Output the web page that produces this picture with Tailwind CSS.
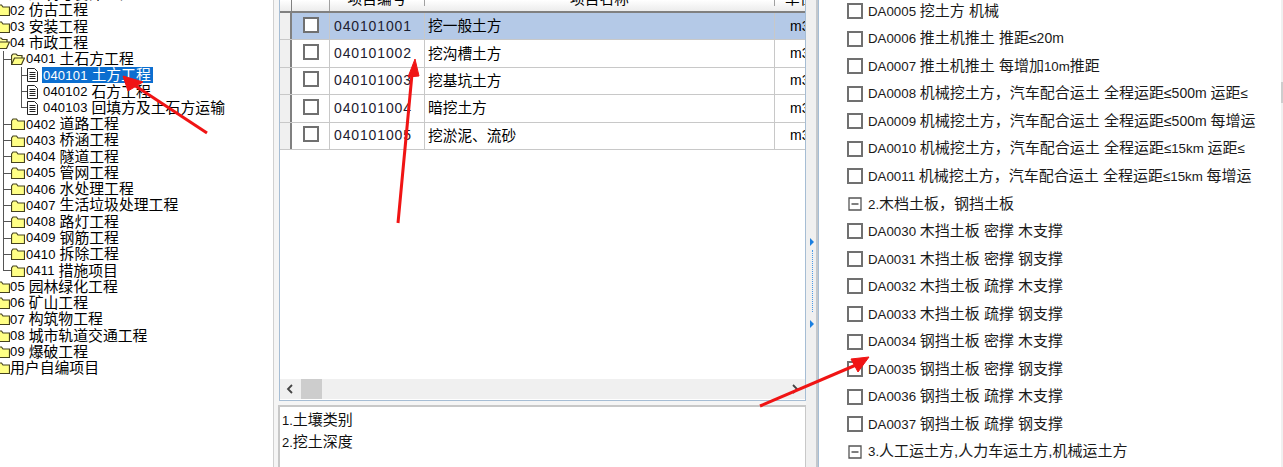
<!DOCTYPE html>
<html lang="zh-CN">
<head>
  <meta charset="UTF-8" />
  <title>工程量清单</title>
  <script src="https://cdn.jsdelivr.net/npm/@tailwindcss/browser@4"></script>
</head>
<body class="bg-white">
<svg class="hidden">
  <symbol id="folder" viewBox="0 0 14 12"><path d="M.5 3V11.5H13.5V3H7L5.5 1H2L.5 3Z" fill="#ffff85" stroke="#45421f" stroke-width="1.2"/></symbol>
  <symbol id="folder-open" viewBox="0 0 14 12"><path d="M.5 11.5V2.5L2 1H5L6.5 2.5H11V5" fill="#ffffa0" stroke="#45421f" stroke-width="1.2"/><path d="M.5 11.5L3.5 5H13.5L10.5 11.5Z" fill="#ffff85" stroke="#45421f" stroke-width="1.2"/></symbol>
  <symbol id="doc" viewBox="0 0 11 14"><path d="M.5.5H7.5L10.5 3.5V13.5H.5Z" fill="#fff" stroke="#222"/><path d="M2.5 4.5H8.5M2.5 6.5H8.5M2.5 8.5H8.5M2.5 10.5H8.5" stroke="#222"/></symbol>
</svg>

<div class="relative flex w-[1283px] h-[467px] overflow-hidden bg-white text-black text-[14.7px] font-['Liberation_Sans','Noto_Sans_CJK_SC',sans-serif]">

  <!-- tree -->
  <div class="w-[274px] shrink-0 overflow-hidden border-r border-[#d0d0d0] text-[14.85px] whitespace-nowrap">
    <div class="mt-[-14px]">
      <div class="flex items-center h-[16.27px] ml-[-4px]"><svg class="w-[14px] h-[12px]"><use href="#folder"/></svg><span class="text-[13px] tracking-[.2px]">01&nbsp;</span>建筑与装饰工程</div>
      <div class="flex items-center h-[16.27px] ml-[-4px]"><svg class="w-[14px] h-[12px]"><use href="#folder"/></svg><span class="text-[13px] tracking-[.2px]">02&nbsp;</span>仿古工程</div>
      <div class="flex items-center h-[16.27px] ml-[-4px]"><svg class="w-[14px] h-[12px]"><use href="#folder"/></svg><span class="text-[13px] tracking-[.2px]">03&nbsp;</span>安装工程</div>
      <div class="flex items-center h-[16.27px] ml-[-4px]"><svg class="w-[14px] h-[12px]"><use href="#folder-open"/></svg><span class="text-[13px] tracking-[.2px]">04&nbsp;</span>市政工程</div>

      <div class="relative">
        <span class="absolute left-[3px] top-0 bottom-[8px] w-px bg-[#555]"></span>
        <div class="flex items-center h-[16.27px] ml-[3px]"><span class="w-[8px] h-px bg-[#555]"></span><svg class="w-[14px] h-[12px]"><use href="#folder-open"/></svg><span class="text-[13px] tracking-[.2px] ml-[1px]">0401&nbsp;</span>土石方工程</div>
        <div class="relative">
          <span class="absolute left-[21px] top-0 bottom-[8px] w-px bg-[#555]"></span>
          <div class="flex items-center h-[16.27px] ml-[21px]"><span class="w-[6px] h-px bg-[#555]"></span><svg class="w-[11px] h-[14px]"><use href="#doc"/></svg><span class="flex items-center h-[16px] ml-[4px] pl-px pr-[2px] bg-[#0c6fd0] text-white"><span class="text-[13px] tracking-[.2px]">040101&nbsp;</span>土方工程</span></div>
          <div class="flex items-center h-[16.27px] ml-[21px]"><span class="w-[6px] h-px bg-[#555]"></span><svg class="w-[11px] h-[14px]"><use href="#doc"/></svg><span class="text-[13px] tracking-[.2px] ml-[5px]">040102&nbsp;</span>石方工程</div>
          <div class="flex items-center h-[16.27px] ml-[21px]"><span class="w-[6px] h-px bg-[#555]"></span><svg class="w-[11px] h-[14px]"><use href="#doc"/></svg><span class="text-[13px] tracking-[.2px] ml-[5px]">040103&nbsp;</span>回填方及土石方运输</div>
        </div>
        <div class="flex items-center h-[16.27px] ml-[3px]"><span class="w-[8px] h-px bg-[#555]"></span><svg class="w-[14px] h-[12px]"><use href="#folder"/></svg><span class="text-[13px] tracking-[.2px] ml-[1px]">0402&nbsp;</span>道路工程</div>
        <div class="flex items-center h-[16.27px] ml-[3px]"><span class="w-[8px] h-px bg-[#555]"></span><svg class="w-[14px] h-[12px]"><use href="#folder"/></svg><span class="text-[13px] tracking-[.2px] ml-[1px]">0403&nbsp;</span>桥涵工程</div>
        <div class="flex items-center h-[16.27px] ml-[3px]"><span class="w-[8px] h-px bg-[#555]"></span><svg class="w-[14px] h-[12px]"><use href="#folder"/></svg><span class="text-[13px] tracking-[.2px] ml-[1px]">0404&nbsp;</span>隧道工程</div>
        <div class="flex items-center h-[16.27px] ml-[3px]"><span class="w-[8px] h-px bg-[#555]"></span><svg class="w-[14px] h-[12px]"><use href="#folder"/></svg><span class="text-[13px] tracking-[.2px] ml-[1px]">0405&nbsp;</span>管网工程</div>
        <div class="flex items-center h-[16.27px] ml-[3px]"><span class="w-[8px] h-px bg-[#555]"></span><svg class="w-[14px] h-[12px]"><use href="#folder"/></svg><span class="text-[13px] tracking-[.2px] ml-[1px]">0406&nbsp;</span>水处理工程</div>
        <div class="flex items-center h-[16.27px] ml-[3px]"><span class="w-[8px] h-px bg-[#555]"></span><svg class="w-[14px] h-[12px]"><use href="#folder"/></svg><span class="text-[13px] tracking-[.2px] ml-[1px]">0407&nbsp;</span>生活垃圾处理工程</div>
        <div class="flex items-center h-[16.27px] ml-[3px]"><span class="w-[8px] h-px bg-[#555]"></span><svg class="w-[14px] h-[12px]"><use href="#folder"/></svg><span class="text-[13px] tracking-[.2px] ml-[1px]">0408&nbsp;</span>路灯工程</div>
        <div class="flex items-center h-[16.27px] ml-[3px]"><span class="w-[8px] h-px bg-[#555]"></span><svg class="w-[14px] h-[12px]"><use href="#folder"/></svg><span class="text-[13px] tracking-[.2px] ml-[1px]">0409&nbsp;</span>钢筋工程</div>
        <div class="flex items-center h-[16.27px] ml-[3px]"><span class="w-[8px] h-px bg-[#555]"></span><svg class="w-[14px] h-[12px]"><use href="#folder"/></svg><span class="text-[13px] tracking-[.2px] ml-[1px]">0410&nbsp;</span>拆除工程</div>
        <div class="flex items-center h-[16.27px] ml-[3px]"><span class="w-[8px] h-px bg-[#555]"></span><svg class="w-[14px] h-[12px]"><use href="#folder"/></svg><span class="text-[13px] tracking-[.2px] ml-[1px]">0411&nbsp;</span>措施项目</div>
      </div>

      <div class="flex items-center h-[16.27px] ml-[-4px]"><svg class="w-[14px] h-[12px]"><use href="#folder"/></svg><span class="text-[13px] tracking-[.2px]">05&nbsp;</span>园林绿化工程</div>
      <div class="flex items-center h-[16.27px] ml-[-4px]"><svg class="w-[14px] h-[12px]"><use href="#folder"/></svg><span class="text-[13px] tracking-[.2px]">06&nbsp;</span>矿山工程</div>
      <div class="flex items-center h-[16.27px] ml-[-4px]"><svg class="w-[14px] h-[12px]"><use href="#folder"/></svg><span class="text-[13px] tracking-[.2px]">07&nbsp;</span>构筑物工程</div>
      <div class="flex items-center h-[16.27px] ml-[-4px]"><svg class="w-[14px] h-[12px]"><use href="#folder"/></svg><span class="text-[13px] tracking-[.2px]">08&nbsp;</span>城市轨道交通工程</div>
      <div class="flex items-center h-[16.27px] ml-[-4px]"><svg class="w-[14px] h-[12px]"><use href="#folder"/></svg><span class="text-[13px] tracking-[.2px]">09&nbsp;</span>爆破工程</div>
      <div class="flex items-center h-[16.27px] ml-[-4px]"><svg class="w-[14px] h-[12px]"><use href="#folder"/></svg>用户自编项目</div>
    </div>
  </div>

  <!-- middle panel -->
  <div class="w-[532px] shrink-0 flex flex-col bg-[#f5f5f5]">
    <div class="h-[401px] ml-[5px] flex flex-col bg-white border-l border-r border-b border-[#a6bdd4]">
      <div class="h-[379px] overflow-hidden">
        <div class="grid grid-cols-[12px_38px_95px_350px_30px] h-[13px] items-end bg-gradient-to-b from-white to-[#ececec] border-b-2 border-[#808080] text-center leading-[13px] overflow-hidden">
          <div class="h-full border-r border-[#808080]"></div>
          <div class="h-full border-r border-[#a0a0a0]"></div>
          <div class="h-full border-r border-[#a0a0a0] -translate-y-[7px]">项目编号</div>
          <div class="h-full border-r border-[#a0a0a0] -translate-y-[7px]">项目名称</div>
          <div class="h-full -translate-y-[7px] pl-[10px] text-left whitespace-nowrap overflow-hidden">单位</div>
        </div>
        <div class="grid grid-cols-[12px_38px_95px_350px_30px] h-[27.4px] bg-[#b4c9e7] border-b border-[#c8c8c8] items-center">
          <div class="h-full bg-[#f0f0f0] border-r-2 border-[#808080]"></div>
          <div class="h-full flex items-center justify-center border-r border-[#c8c8c8]"><span class="w-[16px] h-[16px] -mt-[3px] bg-white border-2 border-[#707070]"></span></div>
          <div class="h-full flex items-center pl-[4px] border-r border-[#c8c8c8] text-[14px] tracking-[.87px] text-[#1c2030]">040101001</div>
          <div class="h-full flex items-center pl-[3px] border-r border-[#c8c8c8]">挖一般土方</div>
          <div class="pl-[15px] overflow-hidden text-[14px]">m3</div>
        </div>
        <div class="grid grid-cols-[12px_38px_95px_350px_30px] h-[27.4px] border-b border-[#c8c8c8] items-center">
          <div class="h-full bg-[#f0f0f0] border-r-2 border-[#808080]"></div>
          <div class="h-full flex items-center justify-center border-r border-[#c8c8c8]"><span class="w-[16px] h-[16px] -mt-[3px] bg-white border-2 border-[#707070]"></span></div>
          <div class="h-full flex items-center pl-[4px] border-r border-[#c8c8c8] text-[14px] tracking-[.87px] text-[#1c2030]">040101002</div>
          <div class="h-full flex items-center pl-[3px] border-r border-[#c8c8c8]">挖沟槽土方</div>
          <div class="pl-[15px] overflow-hidden text-[14px]">m3</div>
        </div>
        <div class="grid grid-cols-[12px_38px_95px_350px_30px] h-[27.4px] border-b border-[#c8c8c8] items-center">
          <div class="h-full bg-[#f0f0f0] border-r-2 border-[#808080]"></div>
          <div class="h-full flex items-center justify-center border-r border-[#c8c8c8]"><span class="w-[16px] h-[16px] -mt-[3px] bg-white border-2 border-[#707070]"></span></div>
          <div class="h-full flex items-center pl-[4px] border-r border-[#c8c8c8] text-[14px] tracking-[.87px] text-[#1c2030]">040101003</div>
          <div class="h-full flex items-center pl-[3px] border-r border-[#c8c8c8]">挖基坑土方</div>
          <div class="pl-[15px] overflow-hidden text-[14px]">m3</div>
        </div>
        <div class="grid grid-cols-[12px_38px_95px_350px_30px] h-[27.4px] border-b border-[#c8c8c8] items-center">
          <div class="h-full bg-[#f0f0f0] border-r-2 border-[#808080]"></div>
          <div class="h-full flex items-center justify-center border-r border-[#c8c8c8]"><span class="w-[16px] h-[16px] -mt-[3px] bg-white border-2 border-[#707070]"></span></div>
          <div class="h-full flex items-center pl-[4px] border-r border-[#c8c8c8] text-[14px] tracking-[.87px] text-[#1c2030]">040101004</div>
          <div class="h-full flex items-center pl-[3px] border-r border-[#c8c8c8]">暗挖土方</div>
          <div class="pl-[15px] overflow-hidden text-[14px]">m3</div>
        </div>
        <div class="grid grid-cols-[12px_38px_95px_350px_30px] h-[27.4px] border-b border-[#c8c8c8] items-center">
          <div class="h-full bg-[#f0f0f0] border-r-2 border-[#808080]"></div>
          <div class="h-full flex items-center justify-center border-r border-[#c8c8c8]"><span class="w-[16px] h-[16px] -mt-[3px] bg-white border-2 border-[#707070]"></span></div>
          <div class="h-full flex items-center pl-[4px] border-r border-[#c8c8c8] text-[14px] tracking-[.87px] text-[#1c2030]">040101005</div>
          <div class="h-full flex items-center pl-[3px] border-r border-[#c8c8c8]">挖淤泥、流砂</div>
          <div class="pl-[15px] overflow-hidden text-[14px]">m3</div>
        </div>
      </div>
      <div class="h-[20px] flex items-center justify-between bg-[#f0f0f0]">
        <div class="flex items-center">
          <svg class="w-[21px] h-[20px]" viewBox="0 0 21 20"><path d="M12 6L8 10L12 14" fill="none" stroke="#444" stroke-width="1.8"/></svg>
          <span class="w-[21px] h-[20px] bg-[#cdcdcd]"></span>
        </div>
        <svg class="w-[21px] h-[20px]" viewBox="0 0 21 20"><path d="M9 6L13 10L9 14" fill="none" stroke="#444" stroke-width="1.8"/></svg>
      </div>
    </div>
    <div class="mt-[4px] ml-[4px] flex-1 bg-white border-t-2 border-l-2 border-r border-[#c8c8c8] pt-[3px] pl-[2px] leading-[20.5px] text-[15px] text-[#111]">
      <div><span class="text-[13px]">1.</span>土壤类别</div>
      <div><span class="text-[13px]">2.</span>挖土深度</div>
    </div>
  </div>

  <!-- splitter -->
  <div class="relative w-[12px] shrink-0 bg-[#f0f0f0] border-r-2 border-[#c4c8cc]">
    <div class="absolute left-[4px] top-[238px] flex flex-col items-start">
      <span class="w-0 h-0 border-y-[4px] border-y-transparent border-l-[4px] border-l-[#1a7fe0]"></span>
      <span class="h-[62px] mt-[4px] mb-[8px] ml-[2px] border-l border-dotted border-[#4a9ae8]"></span>
      <span class="w-0 h-0 border-y-[4px] border-y-transparent border-l-[4px] border-l-[#1a7fe0]"></span>
    </div>
  </div>

  <!-- right list -->
  <div class="flex-1 relative overflow-hidden border-l border-[#a6bdd4] pl-[28px] whitespace-nowrap text-[15px] text-[#1a1a1a]">
    <div class="mt-[-2.8px]">
      <div class="flex items-center h-[27.55px] gap-[5px]"><span class="w-[16px] h-[16px] border-2 border-[#707070]"></span><span><span class="text-[13.3px]">DA0005 </span>挖土方 机械</span></div>
      <div class="flex items-center h-[27.55px] gap-[5px]"><span class="w-[16px] h-[16px] border-2 border-[#707070]"></span><span><span class="text-[13.3px]">DA0006 </span>推土机推土 推距<span class="text-[14px]">≤20m</span></span></div>
      <div class="flex items-center h-[27.55px] gap-[5px]"><span class="w-[16px] h-[16px] border-2 border-[#707070]"></span><span><span class="text-[13.3px]">DA0007 </span>推土机推土 每增加<span class="text-[13.3px]">10m</span>推距</span></div>
      <div class="flex items-center h-[27.55px] gap-[5px]"><span class="w-[16px] h-[16px] border-2 border-[#707070]"></span><span><span class="text-[13.3px]">DA0008 </span>机械挖土方，汽车配合运土 全程运距<span class="text-[14px]">≤500m </span>运距<span class="text-[13.3px]">≤</span></span></div>
      <div class="flex items-center h-[27.55px] gap-[5px]"><span class="w-[16px] h-[16px] border-2 border-[#707070]"></span><span><span class="text-[13.3px]">DA0009 </span>机械挖土方，汽车配合运土 全程运距<span class="text-[14px]">≤500m </span>每增运</span></div>
      <div class="flex items-center h-[27.55px] gap-[5px]"><span class="w-[16px] h-[16px] border-2 border-[#707070]"></span><span><span class="text-[13.3px]">DA0010 </span>机械挖土方，汽车配合运土 全程运距<span class="text-[13.3px]">≤15km </span>运距<span class="text-[13.3px]">≤</span></span></div>
      <div class="flex items-center h-[27.55px] gap-[5px]"><span class="w-[16px] h-[16px] border-2 border-[#707070]"></span><span><span class="text-[13.3px]">DA0011 </span>机械挖土方，汽车配合运土 全程运距<span class="text-[13.3px]">≤15km </span>每增运</span></div>
      <div class="flex items-center h-[27.55px] gap-[6px] pl-px"><svg class="w-[14px] h-[14px]" viewBox="0 0 14 14"><path d="M1 1H13V13H1ZM3.5 7H10.5" fill="none" stroke="#555" stroke-width="1.3"/></svg><span><span class="text-[13.3px]">2.</span>木档土板，钢挡土板</span></div>
      <div class="flex items-center h-[27.55px] gap-[5px]"><span class="w-[16px] h-[16px] border-2 border-[#707070]"></span><span><span class="text-[13.3px]">DA0030 </span>木挡土板 密撑 木支撑</span></div>
      <div class="flex items-center h-[27.55px] gap-[5px]"><span class="w-[16px] h-[16px] border-2 border-[#707070]"></span><span><span class="text-[13.3px]">DA0031 </span>木挡土板 密撑 钢支撑</span></div>
      <div class="flex items-center h-[27.55px] gap-[5px]"><span class="w-[16px] h-[16px] border-2 border-[#707070]"></span><span><span class="text-[13.3px]">DA0032 </span>木挡土板 疏撑 木支撑</span></div>
      <div class="flex items-center h-[27.55px] gap-[5px]"><span class="w-[16px] h-[16px] border-2 border-[#707070]"></span><span><span class="text-[13.3px]">DA0033 </span>木挡土板 疏撑 钢支撑</span></div>
      <div class="flex items-center h-[27.55px] gap-[5px]"><span class="w-[16px] h-[16px] border-2 border-[#707070]"></span><span><span class="text-[13.3px]">DA0034 </span>钢挡土板 密撑 木支撑</span></div>
      <div class="flex items-center h-[27.55px] gap-[5px]"><span class="w-[16px] h-[16px] border-2 border-[#707070]"></span><span><span class="text-[13.3px]">DA0035 </span>钢挡土板 密撑 钢支撑</span></div>
      <div class="flex items-center h-[27.55px] gap-[5px]"><span class="w-[16px] h-[16px] border-2 border-[#707070]"></span><span><span class="text-[13.3px]">DA0036 </span>钢挡土板 疏撑 木支撑</span></div>
      <div class="flex items-center h-[27.55px] gap-[5px]"><span class="w-[16px] h-[16px] border-2 border-[#707070]"></span><span><span class="text-[13.3px]">DA0037 </span>钢挡土板 疏撑 钢支撑</span></div>
      <div class="flex items-center h-[27.55px] gap-[6px] pl-px"><svg class="w-[14px] h-[14px]" viewBox="0 0 14 14"><path d="M1 1H13V13H1ZM3.5 7H10.5" fill="none" stroke="#555" stroke-width="1.3"/></svg><span><span class="text-[13.3px]">3.</span>人工运土方,人力车运土方,机械运土方</span></div>
    </div>
    <!-- page scrollbar, cut off at the window edge -->
    <div class="absolute right-0 top-0 bottom-0 w-[2px] bg-[#f0f0f0]"><div class="mt-[82px] h-[21px] bg-[#cdcdcd]"></div></div>
  </div>

  <!-- annotation arrows on the screenshot -->
  <svg class="absolute inset-0 pointer-events-none" width="1283" height="467" viewBox="0 0 1283 467">
    <g fill="#f01414" stroke="#f01414">
      <path d="M207 133L134 85" fill="none" stroke-width="3"/>
      <path d="M123 76L143 82L128 91Z" stroke-width="1"/>
      <path d="M398 223L412 74" fill="none" stroke-width="3"/>
      <path d="M415 59L419 76L408 77Z" stroke-width="1"/>
      <path d="M760 406L856 365" fill="none" stroke-width="3"/>
      <path d="M869 357L858 372L851 359Z" stroke-width="1"/>
    </g>
  </svg>
</div>
</body>
</html>
